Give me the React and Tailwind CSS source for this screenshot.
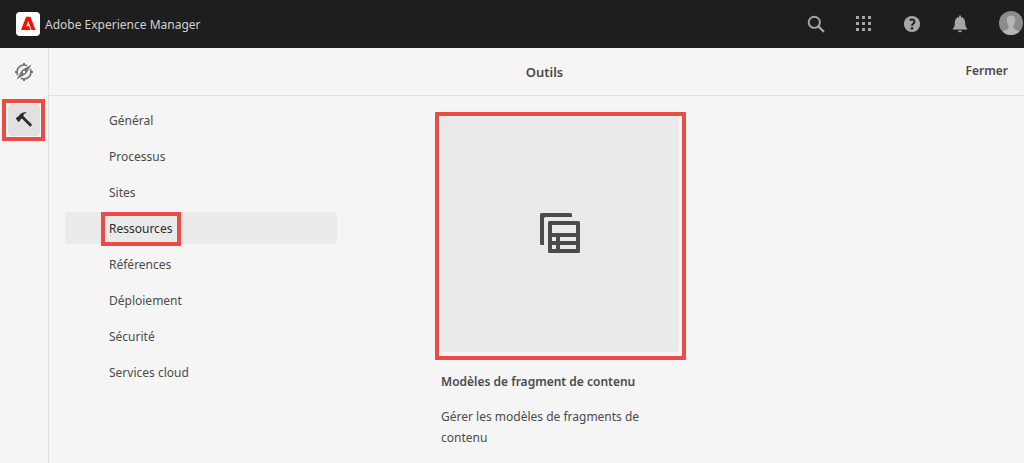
import React from 'react';

const sections = [
  'Général',
  'Processus',
  'Sites',
  'Ressources',
  'Références',
  'Déploiement',
  'Sécurité',
  'Services cloud',
];

function Highlight({ className }) {
  return <span aria-hidden="true" className={`pointer-events-none absolute border-4 border-[#e94b45] ${className}`} />;
}

function AdobeLogo() {
  return (
    <svg viewBox="0 0 24 24" className="size-6" aria-hidden="true">
      <rect width="24" height="24" rx="4" fill="#fff" />
      <path fill="#fa0f00" d="M10.100 4.800h4.300L19.500 18H5z" />
      <path fill="#fff" d="M12.200 9l3.300 9h-.9l-1.500-3.700H10.200z" />
    </svg>
  );
}

function SearchIcon() {
  return (
    <svg viewBox="0 0 18 18" className="size-[18px]" fill="none" stroke="currentColor" aria-hidden="true">
      <circle cx="7.3" cy="7.3" r="5.6" strokeWidth="1.9" />
      <path d="M11.5 11.5l4.8 4.8" strokeWidth="2.3" strokeLinecap="round" />
    </svg>
  );
}

function AppsIcon() {
  return (
    <svg viewBox="0 0 18 18" className="size-[18px]" fill="currentColor" shapeRendering="crispEdges" aria-hidden="true">
      {[1, 7, 13].map((y) => [1, 7, 13].map((x) => <rect key={`${x}-${y}`} x={x} y={y} width="3" height="3" />))}
    </svg>
  );
}

function HelpIcon() {
  return (
    <svg viewBox="0 0 18 18" className="size-[18px]" aria-hidden="true">
      <circle cx="9" cy="9" r="8.1" fill="currentColor" />
      <path d="M6.7 5.3c1.9-1.3 4.8-.9 4.8 1.4 0 2-2.5 2.1-2.5 4" fill="none" stroke="#1e1e1e" strokeWidth="1.9" />
      <circle cx="9" cy="13.2" r="1.25" fill="#1e1e1e" />
    </svg>
  );
}

function BellIcon() {
  return (
    <svg viewBox="0 0 18 18" className="size-[18px]" fill="currentColor" aria-hidden="true">
      <path d="M8.1 2V1.2c0-.6.4-1 .9-1s.9.4.9 1V2c2.7.4 4.2 2.3 4.2 5 0 3.5.6 5 1.7 6 .5.5.5 1.6-.4 1.6H2.6c-.9 0-.9-1.1-.4-1.6 1.1-1 1.7-2.5 1.7-6 0-2.7 1.5-4.6 4.2-5z" />
      <path d="M7 15.5h4c0 1-.9 1.8-2 1.8s-2-.8-2-1.8z" />
    </svg>
  );
}

function Avatar() {
  return (
    <svg viewBox="0 0 24 24" className="size-6" aria-hidden="true">
      <defs>
        <clipPath id="avatar-clip">
          <circle cx="12" cy="12" r="12" />
        </clipPath>
      </defs>
      <circle cx="12" cy="12" r="12" fill="#8c8c8c" />
      <path
        clipPath="url(#avatar-clip)"
        fill="#b5b5b5"
        d="M12 4.500c3 0 4.400 2 4.200 4.800-.1 2.300-.8 4-1.800 5.200v2.300c0 1 .7 1.400 2.200 2 2 .8 3.600 1.300 4.400 2.700V25H3v-3.500c.8-1.400 2.400-1.900 4.400-2.700 1.500-.6 2.200-1 2.200-2v-2.300C8.600 13.300 7.900 11.600 7.800 9.300 7.600 6.500 9 4.500 12 4.500z"
      />
    </svg>
  );
}

function CompassIcon() {
  return (
    <svg viewBox="0 0 18 18" className="size-[18px]" aria-hidden="true">
      <circle cx="9" cy="9" r="7" fill="none" stroke="currentColor" strokeWidth="1.700" />
      <path d="M9 0v2.500M9 15.500V18M0 9h2.500M15.500 9H18" stroke="currentColor" strokeWidth="2" />
      <path d="M1 17 17 1" stroke="#f5f5f5" strokeWidth="4.500" />
      <path d="M1.500 16.500 7 7 16.500 1.500 11 11z" fill="currentColor" />
      <circle cx="9" cy="9" r="1.200" fill="#f5f5f5" />
    </svg>
  );
}

function HammerIcon() {
  return (
    <svg viewBox="0 0 18 18" className="size-[18px]" fill="currentColor" aria-hidden="true">
      <path d="M.8 7.500 2.300 5.700l.8.1 1.500-2C6.200 1.700 8.600.8 11.200 1.300c.3.1.3.5 0 .6-2 .4-2.900 1.400-2.700 2.700l.1.700 8 7.900c.4.400.4.8 0 1.200l-.8.9c-.4.400-.8.400-1.200 0L6.900 7.600 5.300 8.700l-.1 1L3.500 10.900z" />
    </svg>
  );
}

function ContentModelIcon() {
  return (
    <svg viewBox="0 0 40 40" className="size-10" fill="#4b4b4b" aria-hidden="true">
      <path d="M1.500 0h29A1.500 1.500 0 0 1 32 1.500V4H5.500A1.500 1.500 0 0 0 4 5.500V32H1.500A1.500 1.500 0 0 1 0 30.500v-29A1.500 1.500 0 0 1 1.500 0z" />
      <path
        fillRule="evenodd"
        d="M9.500 8h29A1.500 1.500 0 0 1 40 9.500v29a1.500 1.500 0 0 1-1.500 1.500h-29A1.500 1.500 0 0 1 8 38.500v-29A1.500 1.500 0 0 1 9.500 8zM12 12v8h24v-8zM12 24v4h4v-4zM20 24v4h16v-4zM12 32v4h4v-4zM20 32v4h16v-4z"
      />
    </svg>
  );
}

const actions = [
  { label: 'Rechercher', Icon: SearchIcon },
  { label: 'Solutions', Icon: AppsIcon },
  { label: 'Aide', Icon: HelpIcon },
  { label: 'Notifications', Icon: BellIcon },
];

export default function App() {
  return (
    <div className="flex min-h-screen flex-col bg-[#f5f5f5] font-['Noto_Sans','Open_Sans',sans-serif] text-xs text-[#4b4b4b]">
      <header className="flex h-12 items-center bg-[#1e1e1e] pl-4 text-[#a6a6a6]">
        <a href="#" className="flex items-center gap-[5px] text-[#d0d0d0]">
          <AdobeLogo />
          <span className="pt-0.5">Adobe Experience Manager</span>
        </a>
        <div className="ml-auto flex items-center">
          {actions.map(({ label, Icon }) => (
            <button key={label} type="button" aria-label={label} className="flex h-12 w-12 items-center justify-center">
              <Icon />
            </button>
          ))}
          <button type="button" aria-label="Profil" className="flex w-10 justify-end pr-px pb-0.5">
            <Avatar />
          </button>
        </div>
      </header>

      <div className="flex flex-1">
        <aside className="flex w-[49px] shrink-0 flex-col items-start gap-4 border-r border-[#e1e1e1] py-2 pl-2">
          <button type="button" aria-label="Navigation" className="flex size-8 items-center justify-center text-[#747474]">
            <CompassIcon />
          </button>
          <button type="button" aria-label="Outils" className="relative flex size-8 items-center justify-center rounded bg-[#e1e1e1] text-[#2c2c2c]">
            <HammerIcon />
            <Highlight className="-inset-y-[5px] -right-[5px] -left-1.5" />
          </button>
        </aside>

        <main className="min-w-0 flex-1">
          <div className="grid h-12 grid-cols-[1fr_auto_1fr] items-center border-b border-[#e1e1e1] pl-4">
            <h1 className="col-start-2 pt-0.5 text-[13px] font-semibold">Outils</h1>
            <button type="button" className="justify-self-end pr-4 pb-0.5 font-semibold">
              Fermer
            </button>
          </div>

          <div className="flex items-start gap-[104px] pl-4">
            <nav className="w-[272px] shrink-0 pt-2">
              <ul className="flex flex-col gap-1">
                {sections.map((name) => (
                  <li key={name}>
                    <a
                      href="#"
                      aria-current={name === 'Ressources' ? 'page' : undefined}
                      className={`flex h-8 items-center rounded pt-0.5 pl-11 ${name === 'Ressources' ? 'bg-[#eaeaea] text-[#2c2c2c]' : ''}`}
                    >
                      <span className="relative">
                        {name}
                        {name === 'Ressources' && <Highlight className="-inset-y-[9px] -right-[9px] -left-2" />}
                      </span>
                    </a>
                  </li>
                ))}
              </ul>
            </nav>

            <a href="#" className="block w-[238px] pt-4">
              <div className="relative flex h-60 items-center justify-center rounded bg-[#eaeaea] pt-0.5">
                <ContentModelIcon />
                <Highlight className="top-0 -right-[7px] -bottom-2 -left-1.5" />
              </div>
              <h2 className="mt-5 leading-5 font-semibold">Modèles de fragment de contenu</h2>
              <p className="mt-3.5 leading-[21px]">Gérer les modèles de fragments de contenu</p>
            </a>
          </div>
        </main>
      </div>
    </div>
  );
}
